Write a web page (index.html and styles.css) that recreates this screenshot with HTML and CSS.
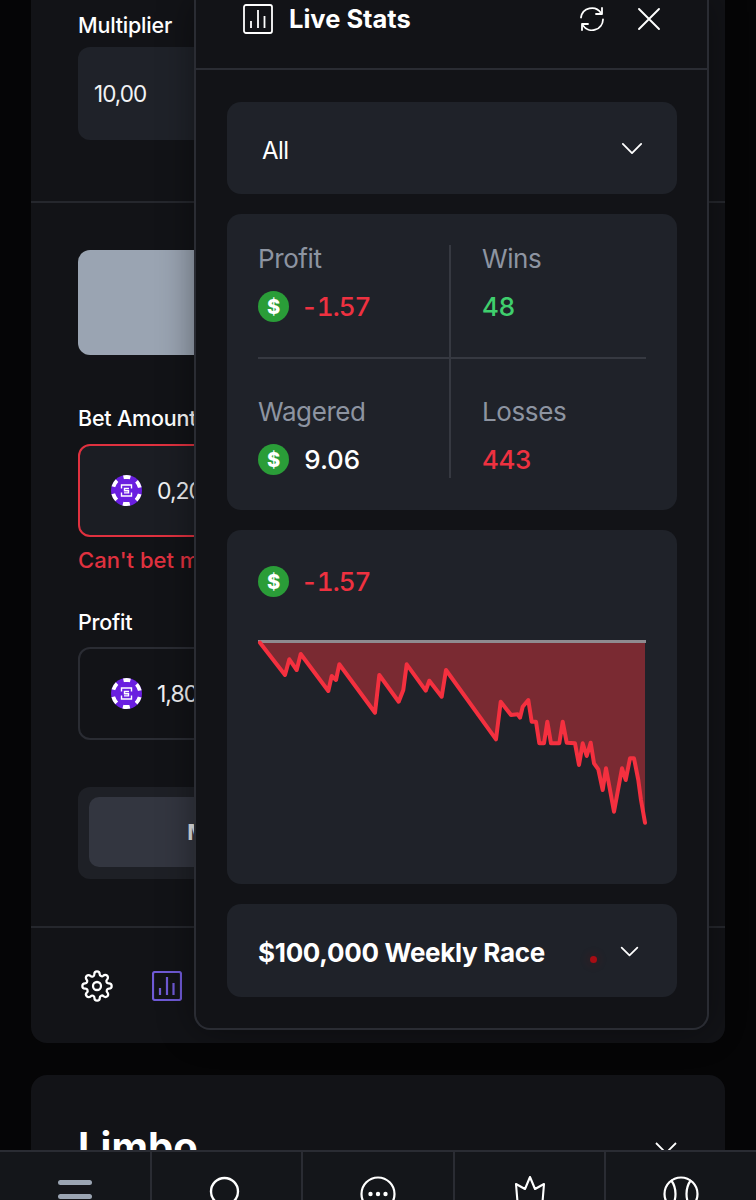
FILE: index.html
```html
<!DOCTYPE html>
<html lang="en">
<head>
<meta charset="utf-8">
<title>Live Stats</title>
<link rel="stylesheet" href="styles.css">
</head>
<body>
<main class="page">
  <section class="game-card">
    <div class="sec sec-top">
      <div class="field-label">Multiplier</div>
      <div class="input input-fill"><span class="value">10,00</span></div>
    </div>
    <div class="sec sec-bet">
      <div class="play-btn"></div>
      <div class="field-label label-bet">Bet Amount</div>
      <div class="input input-error">
        <svg class="chip" viewBox="0 0 31 31"><use href="#chip"/></svg>
        <span class="value">0,20</span>
      </div>
      <div class="error-text">Can't bet more</div>
      <div class="field-label label-profit">Profit</div>
      <div class="input input-outline">
        <svg class="chip" viewBox="0 0 31 31"><use href="#chip"/></svg>
        <span class="value">1,80</span>
      </div>
      <div class="mode-tabs"><div class="mode-tab">Manual</div></div>
    </div>
    <div class="tools">
      <svg class="tool-gear" viewBox="0 0 24 24" fill="none" stroke="#fff" stroke-width="1.7" stroke-linejoin="round"><circle cx="12" cy="12" r="3"/><path d="M19.4 15a1.65 1.65 0 0 0 .33 1.82l.06.06a2 2 0 1 1-2.83 2.83l-.06-.06a1.65 1.65 0 0 0-2.82 1.17V21a2 2 0 1 1-4 0v-.09A1.65 1.65 0 0 0 7.27 19.7l-.06.06a2 2 0 1 1-2.83-2.83l.06-.06A1.65 1.65 0 0 0 3.27 14H3a2 2 0 1 1 0-4h.09A1.65 1.65 0 0 0 4.3 7.27l-.06-.06a2 2 0 1 1 2.83-2.83l.06.06A1.65 1.65 0 0 0 10 3.27V3a2 2 0 1 1 4 0v.09a1.65 1.65 0 0 0 2.73 1.21l.06-.06a2 2 0 1 1 2.83 2.83l-.06.06A1.65 1.65 0 0 0 20.73 10H21a2 2 0 1 1 0 4h-.09a1.65 1.65 0 0 0-1.51 1z"/></svg>
      <svg class="tool-stats" viewBox="0 0 30 30" fill="none" stroke="#6f5ad6" stroke-width="2.2"><rect x="1" y="1" width="28" height="28" rx="2"/><path d="M8 24v-7M15 24V6M21.5 24V12"/></svg>
    </div>
  </section>
  <section class="limbo-card">
    <h2 class="limbo-title">Limbo</h2>
    <svg class="limbo-chevron" viewBox="0 0 24 14" fill="none" stroke="#fff" stroke-width="1.8"><path d="M2 2l10 10L22 2"/></svg>
  </section>

  <aside class="stats-modal">
    <header class="modal-head">
      <svg class="head-icon" viewBox="0 0 30 30" fill="none" stroke="#fff" stroke-width="1.8"><rect x="1" y="1" width="28" height="28" rx="2"/><path d="M8 24v-7M15 24V6M21.5 24V12"/></svg>
      <h1 class="modal-title">Live Stats</h1>
      <svg class="head-refresh" viewBox="0 0 26 26" fill="none" stroke="#fff" stroke-width="1.8" stroke-linecap="round" stroke-linejoin="round"><path d="M2 11.5A11 11 0 0 1 22 7"/><path d="M24 13.5A11 11 0 0 1 4 19.5"/><path d="M23 2v6h-6"/><path d="M3 24v-6h6"/></svg>
      <svg class="head-close" viewBox="0 0 24 24" fill="none" stroke="#fff" stroke-width="1.9" stroke-linecap="round"><path d="M2 2l20 20M22 2L2 22"/></svg>
    </header>
    <div class="modal-body">
      <div class="panel select-panel">
        <span class="select-value">All</span>
        <svg class="chevron" viewBox="0 0 24 14" fill="none" stroke="#fff" stroke-width="2" stroke-linecap="round" stroke-linejoin="round"><path d="M2 2l10 10L22 2"/></svg>
      </div>
      <div class="panel stats-panel">
        <div class="stat stat-a">
          <div class="stat-label">Profit</div>
          <div class="stat-row"><span class="coin">$</span><span class="num red neg">-1.57</span></div>
        </div>
        <div class="stat stat-b">
          <div class="stat-label">Wins</div>
          <div class="stat-row"><span class="num green">48</span></div>
        </div>
        <div class="stat stat-c">
          <div class="stat-label">Wagered</div>
          <div class="stat-row"><span class="coin">$</span><span class="num white">9.06</span></div>
        </div>
        <div class="stat stat-d">
          <div class="stat-label">Losses</div>
          <div class="stat-row"><span class="num red">443</span></div>
        </div>
      </div>
      <div class="panel chart-panel">
        <div class="stat-row"><span class="coin">$</span><span class="num red neg">-1.57</span></div>
        <svg class="chart" viewBox="258 640 388 186">
          <path class="chart-fill" d="M260 642.7L285 675L289.3 659.3L296.7 670L300.7 654L328.3 691L331.7 676L336 680L339.3 664.3L375 712.7L379.3 675L398.7 701.7L403.3 690L406.7 664.3L425.7 690.7L429.3 680.7L441.7 696.7L446 670L496 739.3L500.7 701.7L511 715L517.7 714.3L520 717.7L522.7 706.7L528.3 700L531.7 721.7L536 721.7L539.3 743.3L544 743.3L547.3 721.7L551 743.3L559.3 743.3L562.7 721.7L566.7 742.7L575 743.3L579 765L582.7 743.3L586.7 756L590.7 742.7L594 763.3L598.3 769.3L602.7 790L606 768.3L610 790L614 811.7L617.7 791.7L622 768.3L625.7 780L630 758.3L634 758.3L638.3 780L641 800L645 822.7L645 642Z"/>
          <path class="chart-zero" d="M258 641.5H646"/>
          <path class="chart-line" d="M260 642.7L285 675L289.3 659.3L296.7 670L300.7 654L328.3 691L331.7 676L336 680L339.3 664.3L375 712.7L379.3 675L398.7 701.7L403.3 690L406.7 664.3L425.7 690.7L429.3 680.7L441.7 696.7L446 670L496 739.3L500.7 701.7L511 715L517.7 714.3L520 717.7L522.7 706.7L528.3 700L531.7 721.7L536 721.7L539.3 743.3L544 743.3L547.3 721.7L551 743.3L559.3 743.3L562.7 721.7L566.7 742.7L575 743.3L579 765L582.7 743.3L586.7 756L590.7 742.7L594 763.3L598.3 769.3L602.7 790L606 768.3L610 790L614 811.7L617.7 791.7L622 768.3L625.7 780L630 758.3L634 758.3L638.3 780L641 800L645 822.7"/>
        </svg>
      </div>
      <div class="panel race-panel">
        <span class="race-title">$100,000 Weekly Race</span>
        <span class="race-dot"></span>
        <svg class="race-chevron" viewBox="0 0 24 14" fill="none" stroke="#fff" stroke-width="2.2" stroke-linecap="round" stroke-linejoin="round"><path d="M2 2l10 10L22 2"/></svg>
      </div>
    </div>
  </aside>
</main>

<nav class="bottom-nav">
  <div class="nav-cell"><span class="burger"><i></i><i></i></span></div>
  <div class="nav-cell"><svg class="nav-icon" viewBox="0 0 36 36" fill="none" stroke="#fff" stroke-width="2.4"><circle cx="15.5" cy="15.5" r="13.5"/><path d="M25 25l7 7"/></svg></div>
  <div class="nav-cell"><svg class="nav-icon" viewBox="0 0 36 36" fill="none" stroke="#fff" stroke-width="2.2"><circle cx="18" cy="18" r="16.5"/><circle cx="10.5" cy="18" r="2.2" fill="#fff" stroke="none"/><circle cx="18" cy="18" r="2.2" fill="#fff" stroke="none"/><circle cx="25.5" cy="18" r="2.2" fill="#fff" stroke="none"/></svg></div>
  <div class="nav-cell"><svg class="nav-icon" viewBox="0 0 36 36" fill="none" stroke="#fff" stroke-width="2.1" stroke-linejoin="round"><path d="M18 1l5 12 9-5-2 24H6L4 8l9 5z"/></svg></div>
  <div class="nav-cell"><svg class="nav-icon" viewBox="0 0 36 36" fill="none" stroke="#fff" stroke-width="2.2"><circle cx="18" cy="18" r="16.5"/><path d="M8 4c6 8 6 20 0 28M28 4c-6 8-6 20 0 28"/></svg></div>
</nav>

<svg class="defs" width="0" height="0" aria-hidden="true">
  <symbol id="chip" viewBox="0 0 31 31">
    <circle cx="15.5" cy="15.5" r="15.5" fill="#6a1fe0"/>
    <circle cx="15.5" cy="15.5" r="13.5" fill="none" stroke="#fff" stroke-width="4" stroke-dasharray="7 7.14" stroke-dashoffset="-3.57"/>
    <circle cx="15.5" cy="15.5" r="11.5" fill="#6a1fe0"/>
    <path d="M10.5 13.5v-3.5h10v3.500M10.500 17.500v3.500h10v-3.500" fill="none" stroke="#fff" stroke-width="1.4"/>
    <path d="M18 13.500h-4.500v2.200h4v2.200h-4.500" fill="none" stroke="#fff" stroke-width="1.400"/>
  </symbol>
</svg>
</body>
</html>
```
FILE: styles.css
```css
* { box-sizing: border-box; }
html, body { margin: 0; padding: 0; height: 1200px; overflow: hidden; background: #050506; }
body { display: flex; flex-direction: column; font-family: Inter, "Liberation Sans", sans-serif; color: #fff; }

.page { position: relative; flex: 1 1 auto; height: 1150px; overflow: hidden; padding: 0 31px; }
.defs { position: absolute; }

.game-card { background: #121317; border-radius: 0 0 16px 16px; height: 1043px; display: flex; flex-direction: column; }
.sec { padding: 0 47px; }
.sec-top { height: 203px; padding-top: 13px; border-bottom: 2px solid #25272d; }
.field-label { font-size: 21.5px; line-height: 24px; font-weight: 500; letter-spacing: -0.2px; }
.input { width: 600px; height: 93px; border-radius: 12px; display: flex; align-items: center; }
.input-fill { margin-top: 10px; height: 93px; background: #1f2229; padding-left: 16px; }
.value { font-size: 23px; font-weight: 400; letter-spacing: -1px; color: #f2f3f5; }
.sec-top .value { font-size: 22.500px; }

.sec-bet { height: 725px; padding-top: 47px; border-bottom: 2px solid #25272d; }
.play-btn { width: 600px; height: 105px; border-radius: 12px; background: #9aa4b2; }
.label-bet { margin-top: 51px; }
.input-error { margin-top: 14px; border: 2px solid #e0313f; background: #1b1d23; padding-left: 31px; gap: 15px; }
.chip { width: 31px; height: 31px; flex: none; }
.error-text { margin-top: 10px; font-size: 22px; line-height: 26px; color: #e0313f; font-weight: 500; }
.label-profit { margin-top: 37px; }
.input-outline { margin-top: 13px; border: 2px solid #2a2c33; padding-left: 31px; gap: 15px; height: 93px; }
.mode-tabs { margin-top: 47px; width: 600px; height: 92px; border-radius: 12px; background: #1e2026; padding: 10px 11px; }
.mode-tab { width: 276px; height: 70px; border-radius: 10px; background: #333640; display: flex; align-items: center; justify-content: center; font-size: 22px; font-weight: 700; color: #e8e9eb; }

.tools { display: flex; align-items: center; gap: 39px; padding: 0 47px 0 50px; height: 115px; }
.tool-gear { width: 32px; height: 32px; }
.tool-stats { width: 30px; height: 30px; }

.limbo-card { margin-top: 32px; height: 200px; background: #121317; border-radius: 16px; padding: 50px 47px 0; display: flex; justify-content: space-between; }
.limbo-title { margin: 0; font-size: 40px; line-height: 44px; font-weight: 700; }
.limbo-chevron { width: 24px; height: 14px; margin-top: 16px; }

.stats-modal { position: absolute; left: 194px; top: 0; width: 515px; height: 1030px; background: #121317; border: 2px solid #2a2c33; border-top: 0; border-radius: 0 0 16px 16px; box-shadow: 0 0 36px rgba(0,0,0,.4); }
.modal-head { height: 70px; border-bottom: 2px solid #2a2c33; display: flex; align-items: center; padding: 0 46px 30px 47px; }
.head-icon { width: 30px; height: 30px; flex: none; margin-right: 16px; }
.modal-title { margin: 0; flex: 1; font-size: 25.500px; line-height: 30px; font-weight: 700; }
.head-refresh { width: 26px; height: 26px; margin-right: 32px; }
.head-close { width: 24px; height: 24px; }

.modal-body { padding: 32px 31px 0; display: flex; flex-direction: column; gap: 20px; }
.panel { background: #1f2229; border-radius: 14px; width: 450px; }
.select-panel { height: 92px; display: flex; align-items: center; justify-content: space-between; padding: 0 34px 0 35px; }
.select-value { font-size: 24px; letter-spacing: -0.5px; margin-top: 5px; }
.chevron { width: 22px; height: 13px; }

.stats-panel { height: 296px; padding: 31px; display: grid; grid-template-columns: 193px 195px; grid-template-rows: 114px 119px; }
.stat-a, .stat-c { border-right: 2px solid #363941; }
.stat-a, .stat-b { border-bottom: 2px solid #363941; }
.stat-b, .stat-d { padding-left: 31px; }
.stat-c, .stat-d { padding-top: 39px; }
.stat-label { font-size: 26px; line-height: 28px; color: #8d94a1; letter-spacing: -0.4px; }
.stat-row { display: flex; align-items: center; gap: 15px; margin-top: 18px; height: 31px; }
.coin { width: 31px; height: 31px; border-radius: 50%; background: #2a9d38; color: #fff; font-size: 20px; font-weight: 800; display: flex; align-items: center; justify-content: center; flex: none; }
.num { font-size: 26px; line-height: 30px; font-weight: 500; font-variant-numeric: tabular-nums; letter-spacing: -0.4px; }
.neg { letter-spacing: -1px; margin-left: -3px; }
.red { color: #ee3140; }
.green { color: #3fcf6d; }
.white { color: #fff; }

.chart-panel { height: 354px; padding: 36px 31px 0; }
.chart-panel .stat-row { margin-top: 0; }
.chart { display: block; width: 388px; height: 186px; margin-top: 43px; overflow: visible; }
.chart-fill { fill: #7a2a32; }
.chart-zero { fill: none; stroke: #8f8b90; stroke-width: 3; }
.chart-line { fill: none; stroke: #f4303f; stroke-width: 4; stroke-linejoin: round; stroke-linecap: round; }

.race-panel { height: 93px; display: flex; align-items: center; padding: 3px 38px 0 31px; }
.race-title { flex: 1; font-size: 26px; font-weight: 700; letter-spacing: -0.3px; }
.race-dot { width: 7px; height: 7px; border-radius: 50%; background: #a80d14; box-shadow: 0 0 8px 3px rgba(160,0,10,.12); margin: 14px 23px 0 0; }
.race-chevron { width: 19px; height: 11px; margin-top: -1px; }

.bottom-nav { flex: none; height: 50px; overflow: hidden; background: #14161a; border-top: 2px solid #2a2c33; display: grid; grid-template-columns: 152px 151px 152px 151px 150px; }
.nav-cell { border-right: 2px solid #2a2c33; display: flex; justify-content: center; padding-top: 24px; }
.nav-cell:last-child { border-right: 0; }
.burger { display: flex; flex-direction: column; gap: 9px; width: 34px; padding-top: 4px; }
.burger i { display: block; height: 5px; border-radius: 3px; background: #9aa4b2; }
.nav-icon { width: 36px; height: 36px; flex: none; }
```
